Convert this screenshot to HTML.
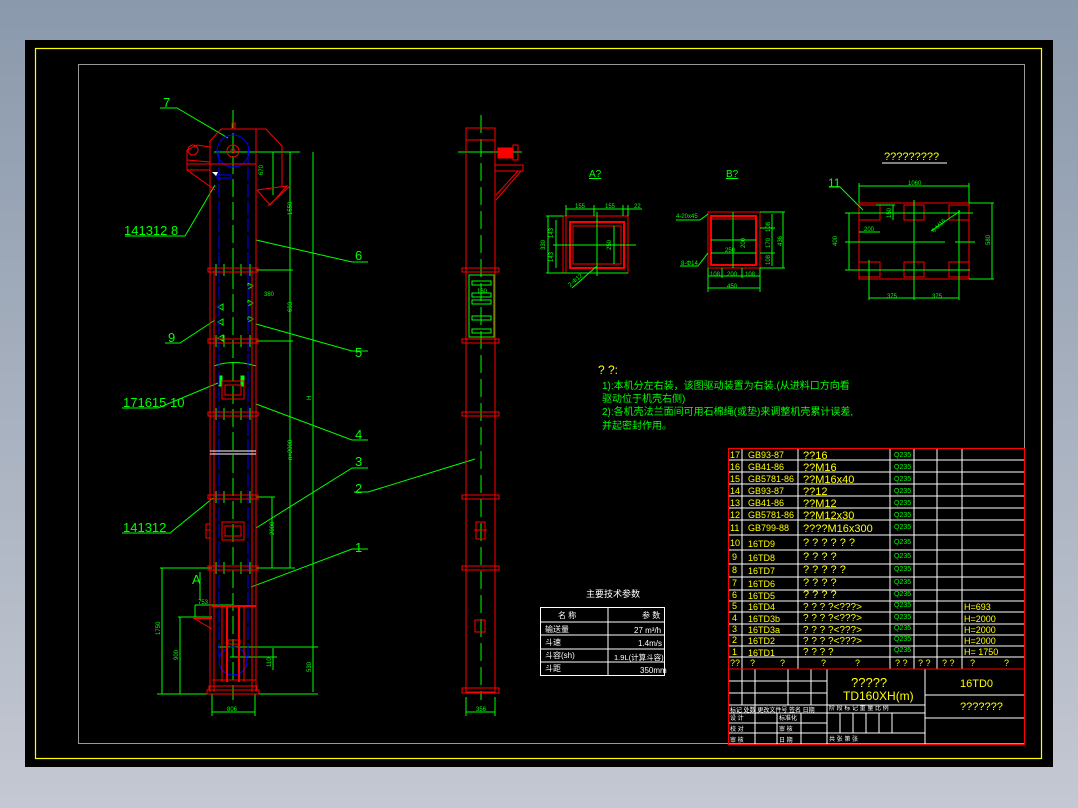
<!DOCTYPE html>
<html><head><meta charset="utf-8"><style>
html,body{margin:0;padding:0;width:1078px;height:808px;overflow:hidden;background:linear-gradient(#8a99ac,#c4c8d2);}
svg{display:block}
text{font-family:"Liberation Sans","Noto Sans CJK SC",sans-serif}
</style></head><body>
<svg width="1078" height="808" viewBox="0 0 1078 808" xmlns="http://www.w3.org/2000/svg">
<rect x="25" y="40" width="1028" height="727" fill="#000"/>
<rect x="35.5" y="48.5" width="1006" height="710" fill="none" stroke="#ff0" stroke-width="1.2"/>
<rect x="78.5" y="64.5" width="946" height="679" fill="none" stroke="#999" stroke-width="1"/>

<g fill="none" stroke-width="1">
<g stroke="#0f0">
<line x1="233" y1="110" x2="233" y2="700" stroke-dasharray="18,5"/>
<line x1="214" y1="152" x2="300" y2="152"/>
<line x1="273" y1="152" x2="273" y2="195"/>
<line x1="290" y1="152" x2="290" y2="568"/>
<line x1="313" y1="152" x2="313" y2="692"/>
<line x1="256" y1="270" x2="293" y2="270"/>
<line x1="256" y1="341" x2="293" y2="341"/>
<line x1="256" y1="497" x2="275" y2="497"/>
<line x1="272" y1="497" x2="272" y2="568"/>
<line x1="256" y1="568" x2="295" y2="568"/>
<line x1="160" y1="568" x2="212" y2="568"/>
<line x1="162" y1="568" x2="162" y2="694"/>
<line x1="180" y1="617" x2="180" y2="694"/>
<line x1="178" y1="617" x2="212" y2="617"/>
<line x1="195" y1="605" x2="195" y2="617"/>
<line x1="195" y1="605" x2="233" y2="605"/>
<line x1="157" y1="694" x2="318" y2="694"/>
<line x1="218" y1="647" x2="318" y2="647"/>
<line x1="230" y1="657" x2="277" y2="657"/>
<line x1="273" y1="648" x2="273" y2="670"/>
<line x1="212" y1="694" x2="212" y2="716"/>
<line x1="255" y1="694" x2="255" y2="716"/>
<line x1="212" y1="712" x2="255" y2="712"/>
<line x1="200" y1="572" x2="200" y2="600"/>
<polyline points="160,108 177,108 228,138"/>
<polyline points="125,236 185,236 215,185"/>
<polyline points="256,240 352,262 368,262"/>
<polyline points="165,343 180,343 215,320"/>
<polyline points="256,324 352,351 368,351"/>
<polyline points="122,408 158,408 218,383"/>
<polyline points="256,404 352,440 368,440"/>
<polyline points="256,528 352,468 368,468"/>
<polyline points="122,533 170,533 213,498"/>
<polyline points="251,587 352,549 368,549"/>
<polyline points="354,492 368,492 475,459"/>
</g>
<g stroke="#0f0">
<path d="M216,264v12M224,264v12M233,264v12M241,264v12M250,264v12M216,335v12M224,335v12M241,335v12M250,335v12M216,408v12M224,408v12M241,408v12M250,408v12M216,491v12M224,491v12M241,491v12M250,491v12M216,562v12M224,562v12M241,562v12M250,562v12"/>
<path d="M218,307l5,-3v6zM218,322l5,-3v6zM218,338l5,-3v6zM248,283l5,3-5,3zM248,300l5,3-5,3zM248,316l5,3-5,3z"/>
<path d="M214,366q19,-7 42,0"/>
<rect x="219" y="376" width="3" height="10" fill="#0f0"/><rect x="241" y="376" width="3" height="10" fill="#0f0"/>
</g>
<g stroke="#00f">
<line x1="219" y1="150" x2="219" y2="660" stroke-dasharray="14,3"/>
<line x1="248" y1="150" x2="248" y2="660" stroke-dasharray="14,3"/>
<circle cx="233" cy="151" r="16"/>
<circle cx="233" cy="661" r="14"/>
<rect x="217" y="175" width="14" height="3"/>
</g>
<g stroke="#f00">
<polyline points="210,141 221,129 266,129 282,146 282,186"/>
<line x1="256" y1="129" x2="256" y2="183"/>
<line x1="210" y1="141" x2="210" y2="692"/>
<line x1="256" y1="183" x2="256" y2="692"/>
<line x1="214" y1="270" x2="214" y2="692"/>
<line x1="252" y1="270" x2="252" y2="692"/>
<polyline points="257,190 287,186 270,205 257,190"/>
<line x1="268" y1="206" x2="290" y2="186"/>
<rect x="232" y="123" width="3" height="6"/>
<circle cx="233" cy="151" r="6"/>
<circle cx="233" cy="151" r="2"/>
<polyline points="210,147 197,145 187,150 187,170 210,170"/>
<line x1="187" y1="160" x2="210" y2="162"/>
<line x1="187" y1="164" x2="256" y2="164"/>
<circle cx="193" cy="150" r="5"/>
<polyline points="187,170 215,190"/>
<rect x="208" y="268" width="50" height="4"/>
<rect x="208" y="339" width="50" height="4"/>
<rect x="208" y="412" width="50" height="4"/>
<rect x="208" y="495" width="50" height="4"/>
<rect x="208" y="566" width="50" height="4"/>
<rect x="207" y="690" width="52" height="4"/>
<rect x="209" y="686" width="48" height="4"/>
<rect x="222" y="381" width="22" height="18"/>
<rect x="225" y="385" width="16" height="10"/>
<rect x="222" y="522" width="22" height="18"/>
<rect x="225" y="526" width="16" height="10"/>
<line x1="210" y1="530" x2="206" y2="530"/><rect x="206" y="524" width="4" height="14"/>
<line x1="212" y1="606" x2="256" y2="606" stroke-width="2"/>
<line x1="222" y1="607" x2="222" y2="682"/>
<line x1="227" y1="607" x2="227" y2="682" stroke-width="2"/>
<line x1="239" y1="607" x2="239" y2="682" stroke-width="2"/>
<line x1="244" y1="607" x2="244" y2="682"/>
<line x1="212" y1="680" x2="256" y2="680"/>
<line x1="193" y1="618" x2="212" y2="618" stroke-width="2"/>
<line x1="195" y1="619" x2="212" y2="629"/>
<rect x="228" y="640" width="12" height="4"/>
</g>
<line x1="210" y1="451" x2="256" y2="451" stroke="#fff"/>
<line x1="210" y1="454" x2="256" y2="454" stroke="#fff"/>
<polygon points="212,172 218,172 216,176" fill="#fff"/>
</g>
<g fill="#0f0" font-size="13">
<text x="163" y="107">7</text>
<text x="124" y="235">141312 8</text>
<text x="355" y="260">6</text>
<text x="168" y="342">9</text>
<text x="355" y="357">5</text>
<text x="123" y="407">171615 10</text>
<text x="355" y="439">4</text>
<text x="355" y="466">3</text>
<text x="123" y="532">141312</text>
<text x="355" y="493">2</text>
<text x="355" y="552">1</text>
<text x="192" y="584">A</text>
</g>
<g fill="#0f0" font-size="6">
<text x="198" y="604">753</text>
<text x="227" y="711">806</text>
<text x="260" y="172" transform="rotate(-90 263 172)">670</text>
<text x="292" y="215" transform="rotate(-90 292 215)">1550</text>
<text x="264" y="296">380</text>
<text x="292" y="312" transform="rotate(-90 292 312)">693</text>
<text x="292" y="460" transform="rotate(-90 292 460)">n×2000</text>
<text x="274" y="535" transform="rotate(-90 274 535)">2000</text>
<text x="160" y="635" transform="rotate(-90 160 635)">1750</text>
<text x="178" y="660" transform="rotate(-90 178 660)">900</text>
<text x="271" y="667" transform="rotate(-90 271 667)">110</text>
<text x="311" y="672" transform="rotate(-90 311 672)">530</text>
<text x="311" y="400" transform="rotate(-90 311 400)">H</text>
</g>

<g fill="none">
<line x1="481" y1="115" x2="481" y2="700" stroke="#0f0" stroke-dasharray="18,6"/>
<line x1="458" y1="152" x2="522" y2="152" stroke="#0f0"/>
<g stroke="#f00">
<rect x="466" y="128" width="29" height="564"/>
<line x1="466" y1="140" x2="495" y2="140"/>
<rect x="498" y="148" width="14" height="10" fill="#f00"/>
<rect x="513" y="145" width="5" height="15"/>
<rect x="495" y="165" width="28" height="6"/>
<polyline points="521,171 496,200"/>
<polyline points="518,171 496,195"/>
<g>
<rect x="462" y="268" width="37" height="4"/><rect x="462" y="339" width="37" height="4"/>
<rect x="462" y="412" width="37" height="4"/><rect x="462" y="495" width="37" height="4"/>
<rect x="462" y="566" width="37" height="4"/><rect x="462" y="688" width="37" height="5"/>
</g>
<rect x="476" y="522" width="9" height="17"/>
<line x1="474" y1="530" x2="487" y2="530"/>
<rect x="475" y="620" width="10" height="12"/>
</g>
<g stroke="#0f0">
<rect x="469" y="275" width="25" height="62"/>
<rect x="472" y="281" width="19" height="4"/><rect x="472" y="293" width="19" height="4"/>
<rect x="472" y="300" width="19" height="4"/><rect x="472" y="316" width="19" height="4"/>
<rect x="472" y="329" width="19" height="4"/>
<line x1="466" y1="697" x2="466" y2="716"/><line x1="495" y1="697" x2="495" y2="716"/>
<line x1="466" y1="712" x2="495" y2="712"/>
</g>
</g>
<text x="477" y="293" fill="#0f0" font-size="6">160</text>
<text x="476" y="711" fill="#0f0" font-size="6">356</text>

<text x="589" y="177" fill="#0f0" font-size="10" text-decoration="underline">A?</text>
<g fill="none" stroke-width="1">
<g stroke="#f00">
<rect x="563" y="216" width="65" height="57"/>
<rect x="570" y="222" width="54" height="46" stroke-width="2"/>
<rect x="573" y="226" width="48" height="38"/>
<line x1="566" y1="216" x2="566" y2="273"/>
</g>
<g stroke="#0f0">
<line x1="566" y1="209" x2="642" y2="209"/>
<line x1="566" y1="205" x2="566" y2="216"/><line x1="594" y1="205" x2="594" y2="216"/>
<line x1="623" y1="205" x2="623" y2="216"/><line x1="628" y1="205" x2="628" y2="216"/>
<line x1="546" y1="216" x2="563" y2="216"/><line x1="546" y1="273" x2="628" y2="273"/>
<line x1="548" y1="216" x2="548" y2="273"/><line x1="556" y1="220" x2="556" y2="268"/>
<line x1="553" y1="245" x2="636" y2="245"/>
<line x1="597" y1="212" x2="597" y2="276"/>
<line x1="614" y1="226" x2="614" y2="264"/>
<line x1="572" y1="288" x2="597" y2="266"/>
</g>
</g>
<g fill="#0f0" font-size="6">
<text x="575" y="208">155</text><text x="605" y="208">155</text><text x="634" y="208">22</text>
<text x="545" y="250" transform="rotate(-90 545 250)">330</text>
<text x="553" y="238" transform="rotate(-90 553 238)">143</text>
<text x="553" y="262" transform="rotate(-90 553 262)">143</text>
<text x="611" y="250" transform="rotate(-90 611 250)">250</text>
<text x="570" y="287" transform="rotate(-40 570 287)">2-Φ12</text>
</g>

<text x="726" y="177" fill="#0f0" font-size="10" text-decoration="underline">B?</text>
<g fill="none">
<g stroke="#f00">
<rect x="708" y="212" width="52" height="56"/>
<rect x="711" y="216" width="45" height="49" stroke-width="2"/>
<line x1="711" y1="219" x2="756" y2="219"/>
</g>
<g stroke="#0f0">
<line x1="760" y1="212" x2="785" y2="212"/><line x1="760" y1="268" x2="785" y2="268"/>
<line x1="783" y1="212" x2="783" y2="268"/><line x1="772" y1="214" x2="772" y2="266"/>
<line x1="760" y1="228" x2="775" y2="228"/><line x1="760" y1="253" x2="775" y2="253"/>
<line x1="708" y1="268" x2="708" y2="292"/><line x1="760" y1="268" x2="760" y2="292"/>
<line x1="708" y1="288" x2="760" y2="288"/><line x1="708" y1="276" x2="760" y2="276"/>
<line x1="722" y1="268" x2="722" y2="278"/><line x1="742" y1="268" x2="742" y2="278"/>
<line x1="733" y1="212" x2="733" y2="268"/><line x1="711" y1="240" x2="756" y2="240"/>
<line x1="711" y1="253" x2="756" y2="253"/>
<polyline points="676,220 700,220 708,214"/>
<polyline points="680,266 698,266 708,253"/>
</g>
</g>
<g fill="#0f0" font-size="6">
<text x="676" y="218">4-20x45</text><text x="681" y="265">8-Φ14</text>
<text x="710" y="276">108</text><text x="727" y="276">200</text><text x="745" y="276">108</text>
<text x="727" y="288">450</text><text x="725" y="252">250</text>
<text x="770" y="232" transform="rotate(-90 770 232)">108</text>
<text x="770" y="248" transform="rotate(-90 770 248)">170</text>
<text x="770" y="265" transform="rotate(-90 770 265)">108</text>
<text x="782" y="246" transform="rotate(-90 782 246)">436</text>
<text x="745" y="248" transform="rotate(-90 745 248)">200</text>
</g>

<text x="884" y="160" fill="#ff0" font-size="11">?????????</text>
<line x1="882" y1="163" x2="947" y2="163" stroke="#fff"/>
<text x="828" y="187" fill="#0f0" font-size="12">11</text>
<g fill="none">
<g stroke="#f00">
<rect x="859" y="203" width="110" height="76"/>
<rect x="859" y="205" width="21" height="15"/><rect x="904" y="205" width="20" height="15"/><rect x="949" y="205" width="20" height="15"/>
<rect x="859" y="262" width="21" height="15"/><rect x="904" y="262" width="20" height="15"/><rect x="949" y="262" width="20" height="15"/>
</g>
<g stroke="#0f0">
<line x1="859" y1="186" x2="969" y2="186"/><line x1="859" y1="183" x2="859" y2="203"/><line x1="969" y1="183" x2="969" y2="203"/>
<line x1="914" y1="200" x2="914" y2="300"/>
<line x1="845" y1="213" x2="973" y2="213"/><line x1="845" y1="270" x2="970" y2="270"/>
<line x1="845" y1="242" x2="945" y2="242"/><line x1="955" y1="242" x2="975" y2="242"/>
<line x1="849" y1="213" x2="849" y2="270"/>
<line x1="969" y1="203" x2="994" y2="203"/><line x1="969" y1="279" x2="994" y2="279"/>
<line x1="992" y1="203" x2="992" y2="279"/>
<line x1="869" y1="260" x2="869" y2="300"/><line x1="959" y1="210" x2="959" y2="300"/>
<line x1="869" y1="298" x2="959" y2="298"/>
<line x1="876" y1="205" x2="895" y2="205"/><line x1="893" y1="205" x2="893" y2="220"/>
<line x1="859" y1="232" x2="880" y2="232"/>
<polyline points="829,187 840,187 863,210"/>
<line x1="931" y1="231" x2="960" y2="211"/>
</g>
</g>
<g fill="#0f0" font-size="6">
<text x="908" y="185">1060</text><text x="887" y="298">375</text><text x="932" y="298">375</text>
<text x="864" y="231">200</text>
<text x="837" y="246" transform="rotate(-90 837 246)">400</text>
<text x="990" y="245" transform="rotate(-90 990 245)">580</text>
<text x="891" y="218" transform="rotate(-90 891 218)">150</text>
<text x="934" y="233" transform="rotate(-45 934 233)">6-M16</text>
</g>

<g font-size="10">
<text x="598" y="374" fill="#ff0" font-size="12">?  ?:</text>
<text x="602" y="389" fill="#0f0">1):本机分左右装，该图驱动装置为右装.(从进料口方向看</text>
<text x="602" y="402" fill="#0f0">驱动位于机壳右侧)</text>
<text x="602" y="415" fill="#0f0">2):各机壳法兰面间可用石棉绳(或垫)来调整机壳累计误差,</text>
<text x="602" y="429" fill="#0f0">并起密封作用。</text>
</g>

<text x="586" y="597" fill="#fff" font-size="9">主要技术参数</text>
<g fill="none" stroke="#fff">
<rect x="540.5" y="607.5" width="124" height="68"/>
<line x1="540" y1="622" x2="665" y2="622"/><line x1="540" y1="635" x2="665" y2="635"/>
<line x1="540" y1="649" x2="665" y2="649"/><line x1="540" y1="662" x2="665" y2="662"/>
<line x1="608" y1="607" x2="608" y2="676"/>
</g>
<g fill="#fff" font-size="8">
<text x="558" y="618">名  称</text><text x="642" y="618">参 数</text>
<text x="545" y="632">输送量</text><text x="634" y="633">27 m³/h</text>
<text x="545" y="645">斗速</text><text x="638" y="646">1.4m/s</text>
<text x="545" y="658">斗容(sh)</text><text x="614" y="660" font-size="7.5">1.9L(计算斗容)</text>
<text x="545" y="671">斗距</text><text x="640" y="673">350mm</text>
</g>

<g fill="none" stroke="#fff" stroke-width="1">
<line x1="728" y1="460" x2="1025" y2="460"/><line x1="728" y1="472" x2="1025" y2="472"/>
<line x1="728" y1="484" x2="1025" y2="484"/><line x1="728" y1="496" x2="1025" y2="496"/>
<line x1="728" y1="508" x2="1025" y2="508"/><line x1="728" y1="520" x2="1025" y2="520"/>
<line x1="728" y1="535" x2="1025" y2="535"/><line x1="728" y1="550" x2="1025" y2="550"/>
<line x1="728" y1="564" x2="1025" y2="564"/><line x1="728" y1="577" x2="1025" y2="577"/>
<line x1="728" y1="590" x2="1025" y2="590"/><line x1="728" y1="601" x2="1025" y2="601"/>
<line x1="728" y1="612" x2="1025" y2="612"/><line x1="728" y1="624" x2="1025" y2="624"/>
<line x1="728" y1="635" x2="1025" y2="635"/><line x1="728" y1="646" x2="1025" y2="646"/>
<line x1="728" y1="657" x2="1025" y2="657"/>
<line x1="742" y1="448" x2="742" y2="669"/><line x1="798" y1="448" x2="798" y2="669"/>
<line x1="890" y1="448" x2="890" y2="669"/><line x1="914" y1="448" x2="914" y2="669"/>
<line x1="937" y1="448" x2="937" y2="669"/><line x1="962" y1="448" x2="962" y2="669"/>
<line x1="827" y1="669" x2="827" y2="745"/><line x1="925" y1="669" x2="925" y2="745"/>
<line x1="925" y1="695" x2="1025" y2="695"/><line x1="925" y1="718" x2="1025" y2="718"/>
<line x1="728" y1="681" x2="827" y2="681"/><line x1="728" y1="693" x2="827" y2="693"/>
<line x1="728" y1="705" x2="925" y2="705"/><line x1="728" y1="713" x2="925" y2="713"/>
<line x1="728" y1="723" x2="827" y2="723"/><line x1="728" y1="733" x2="925" y2="733"/>
<line x1="742" y1="669" x2="742" y2="705"/><line x1="755" y1="669" x2="755" y2="745"/>
<line x1="788" y1="669" x2="788" y2="705"/><line x1="811" y1="669" x2="811" y2="705"/>
<line x1="777" y1="713" x2="777" y2="745"/><line x1="801" y1="713" x2="801" y2="745"/>
<line x1="840" y1="713" x2="840" y2="733"/><line x1="853" y1="713" x2="853" y2="733"/>
<line x1="866" y1="713" x2="866" y2="733"/><line x1="879" y1="713" x2="879" y2="733"/>
<line x1="892" y1="713" x2="892" y2="733"/>
</g>
<g fill="none" stroke="#f00">
<rect x="728.5" y="448.5" width="296" height="296"/>
<line x1="728" y1="669" x2="1025" y2="669"/>
</g>
<g fill="#ff0" font-size="9">
<text x="730" y="458">17</text><text x="748" y="458">GB93-87</text><text x="803" y="459" font-size="11">??16</text>
<text x="730" y="470">16</text><text x="748" y="470">GB41-86</text><text x="803" y="471" font-size="11">??M16</text>
<text x="730" y="482">15</text><text x="748" y="482">GB5781-86</text><text x="803" y="483" font-size="11">??M16x40</text>
<text x="730" y="494">14</text><text x="748" y="494">GB93-87</text><text x="803" y="495" font-size="11">??12</text>
<text x="730" y="506">13</text><text x="748" y="506">GB41-86</text><text x="803" y="507" font-size="11">??M12</text>
<text x="730" y="518">12</text><text x="748" y="518">GB5781-86</text><text x="803" y="519" font-size="11">??M12x30</text>
<text x="730" y="531">11</text><text x="748" y="531">GB799-88</text><text x="803" y="532" font-size="11">????M16x300</text>
<text x="730" y="546">10</text><text x="748" y="547">16TD9</text><text x="803" y="546" font-size="11">?  ?  ?  ?  ?  ?</text>
<text x="732" y="560">9</text><text x="748" y="561">16TD8</text><text x="803" y="560" font-size="11">?  ?  ?  ?</text>
<text x="732" y="573">8</text><text x="748" y="574">16TD7</text><text x="803" y="573" font-size="11">?  ?  ?  ?  ?</text>
<text x="732" y="586">7</text><text x="748" y="587">16TD6</text><text x="803" y="586" font-size="11">?  ?  ?  ?</text>
<text x="732" y="598">6</text><text x="748" y="599">16TD5</text><text x="803" y="598" font-size="11">?  ?  ?  ?</text>
<text x="732" y="609">5</text><text x="748" y="610">16TD4</text><text x="803" y="610" font-size="10">?  ?  ?  ?&lt;???&gt;</text><text x="964" y="610">H=693</text>
<text x="732" y="621">4</text><text x="748" y="622">16TD3b</text><text x="803" y="621" font-size="10">?  ?  ?  ?&lt;???&gt;</text><text x="964" y="622">H=2000</text>
<text x="732" y="632">3</text><text x="748" y="633">16TD3a</text><text x="803" y="633" font-size="10">?  ?  ?  ?&lt;???&gt;</text><text x="964" y="633">H=2000</text>
<text x="732" y="643">2</text><text x="748" y="644">16TD2</text><text x="803" y="644" font-size="10">?  ?  ?  ?&lt;???&gt;</text><text x="964" y="644">H=2000</text>
<text x="732" y="655">1</text><text x="748" y="656">16TD1</text><text x="803" y="655" font-size="10">?  ?  ?  ?</text><text x="964" y="655">H= 1750</text>
<text x="730" y="666">??</text><text x="750" y="666">?</text><text x="780" y="666">?</text><text x="821" y="666">?</text><text x="855" y="666">?</text>
<text x="895" y="666">? ?</text><text x="918" y="666">? ?</text><text x="942" y="666">? ?</text><text x="970" y="666">?</text><text x="1004" y="666">?</text>
<text x="851" y="687" font-size="13">?????</text>
<text x="843" y="700" font-size="12">TD160XH(m)</text>
<text x="960" y="687" font-size="11">16TD0</text>
<text x="960" y="710" font-size="11">???????</text>
</g>
<g fill="#0f0" font-size="7">
<text x="894" y="457">Q235</text><text x="894" y="469">Q235</text><text x="894" y="481">Q235</text><text x="894" y="493">Q235</text>
<text x="894" y="505">Q235</text><text x="894" y="517">Q235</text><text x="894" y="529">Q235</text><text x="894" y="544">Q235</text>
<text x="894" y="558">Q235</text><text x="894" y="571">Q235</text><text x="894" y="584">Q235</text><text x="894" y="596">Q235</text>
<text x="894" y="607">Q235</text><text x="894" y="619">Q235</text><text x="894" y="630">Q235</text><text x="894" y="641">Q235</text><text x="894" y="652">Q235</text>
</g>
<g fill="#fff" font-size="6">
<text x="730" y="712">标记 处数 更改文件号 签名 日期</text>
<text x="730" y="720">设 计</text><text x="779" y="720">标准化</text>
<text x="730" y="731">校 对</text><text x="779" y="731">审 核</text>
<text x="730" y="742">审 核</text><text x="779" y="742">日 期</text>
<text x="829" y="710">阶 段 标 记  重 量  比 例</text>
<text x="829" y="741">共   张   第   张</text>
</g>
</svg>
</body></html>
